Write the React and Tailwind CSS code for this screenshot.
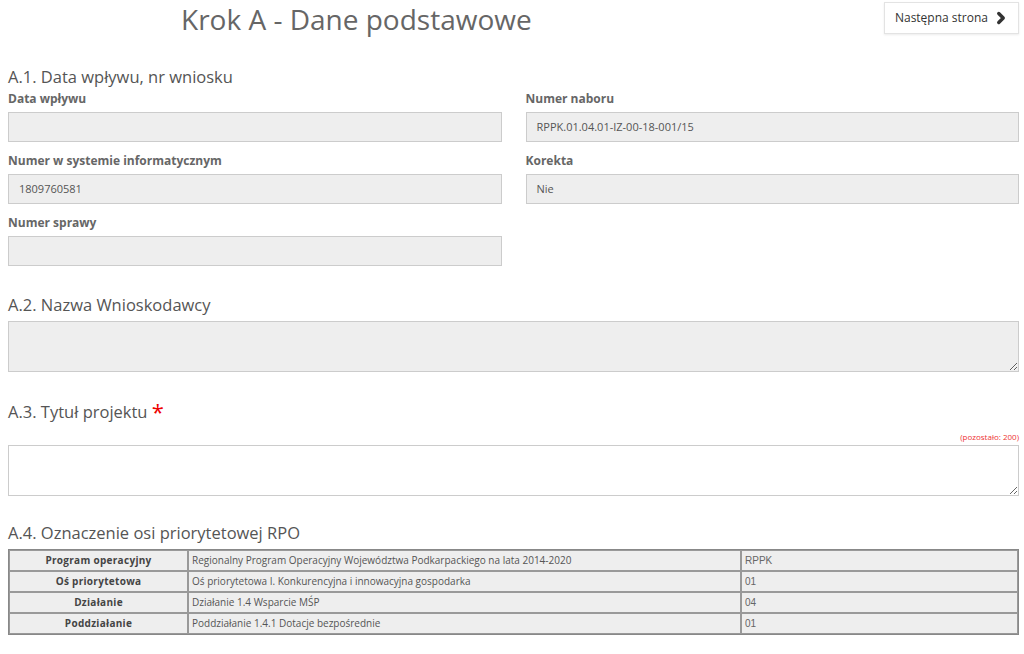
import { ChevronRight } from 'lucide-react';

const FONT = "font-['Open_Sans',sans-serif]";

function Field({ label, value }) {
  return (
    <div>
      <p className="text-[12px] font-bold text-[#666] leading-[16px] mb-[5px]">{label}</p>
      <div className="h-[30px] bg-[#eee] border border-[#ccc] px-[10px] flex items-center text-[11px] text-[#555]">
        {value}
      </div>
    </div>
  );
}

const WIERSZE = [
  ['Program operacyjny', 'Regionalny Program Operacyjny Województwa Podkarpackiego na lata 2014-2020', 'RPPK'],
  ['Oś priorytetowa', 'Oś priorytetowa I. Konkurencyjna i innowacyjna gospodarka', '01'],
  ['Działanie', 'Działanie 1.4 Wsparcie MŚP', '04'],
  ['Poddziałanie', 'Poddziałanie 1.4.1 Dotacje bezpośrednie', '01'],
];

export default function App() {
  return (
    <div className={`${FONT} w-[1024px] h-[654px] bg-white px-[8px] overflow-hidden text-[#555]`}>
      {/* Nagłówek */}
      <div className="flex items-start h-[58px]">
        <h1 className="ml-[173px] mt-[1px] text-[28px] leading-[36px] text-[#666]">Krok A - Dane podstawowe</h1>
        <button className="ml-auto mt-[2px] mr-[-3px] h-[32px] pl-[10px] pr-[8px] flex items-center gap-[4px] bg-white border border-[#e3e3e3] shadow-[0_1px_2px_rgba(0,0,0,0.08)] text-[12px] text-[#333]">
          Następna strona <ChevronRight size={18} strokeWidth={4.5} className="text-[#333]" />
        </button>
      </div>

      {/* A.1 */}
      <h2 className="text-[16.5px] leading-[24px] text-[#555] mt-[7px]">A.1. Data wpływu, nr wniosku</h2>
      <div className="grid grid-cols-2 gap-x-[24px] gap-y-[11px] mt-[2px] mr-[-3px]">
        <Field label="Data wpływu" value="" />
        <Field label="Numer naboru" value="RPPK.01.04.01-IZ-00-18-001/15" />
        <Field label="Numer w systemie informatycznym" value="1809760581" />
        <Field label="Korekta" value="Nie" />
        <Field label="Numer sprawy" value="" />
      </div>

      {/* A.2 */}
      <h2 className="text-[16.5px] leading-[24px] text-[#555] mt-[27px]">A.2. Nazwa Wnioskodawcy</h2>
      <textarea readOnly className="block w-[1011px] h-[51px] mt-[4px] bg-[#eee] border border-[#ccc] resize-y outline-none" />

      {/* A.3 */}
      <h2 className="text-[16.5px] leading-[24px] text-[#555] mt-[27px]">
        A.3. Tytuł projektu <span className="text-[#e00] text-[22px] align-[-2px]">*</span>
      </h2>
      <p className="text-right text-[8px] leading-[10px] text-[#e33] mt-[8px] mr-[-3px]">(pozostało: 200)</p>
      <textarea className="block w-[1011px] h-[51px] mt-[3px] bg-white border border-[#ccc] resize-y outline-none" />

      {/* A.4 */}
      <h2 className="text-[16.5px] leading-[24px] text-[#555] mt-[25px]">A.4. Oznaczenie osi priorytetowej RPO</h2>
      <table className="w-[1011px] mt-[4px] border border-[#888] border-separate border-spacing-0 text-[10px]">
        <tbody>
          {WIERSZE.map(([a, b, c]) => (
            <tr key={a} className="bg-[#eee] h-[21px]">
              <td className="w-[179px] border border-[#999] text-center font-bold text-[#444] text-[10px] tracking-[0.3px]">{a}</td>
              <td className="w-[553px] border border-[#999] px-[3px] text-[#555]">{b}</td>
              <td className="border border-[#999] px-[3px] font-['Liberation_Sans',sans-serif] text-[#666]">{c}</td>
            </tr>
          ))}
        </tbody>
      </table>
    </div>
  );
}
